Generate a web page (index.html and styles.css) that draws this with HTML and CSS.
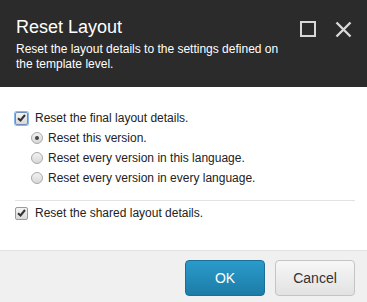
FILE: index.html
```html
<!DOCTYPE html>
<html>
<head>
<meta charset="utf-8">
<link rel="stylesheet" href="styles.css">
</head>
<body>
<div class="dialog">
  <div class="header">
    <div class="header-text">
      <div class="title">Reset Layout</div>
      <div class="subtitle">Reset the layout details to the settings defined on the template level.</div>
    </div>
    <div class="header-icons">
      <svg class="icon" width="16" height="16" viewBox="0 0 16 16"><rect x="1" y="1" width="14" height="14" fill="none" stroke="#d8d8d8" stroke-width="2"/></svg>
      <svg class="icon" width="17" height="17" viewBox="0 0 17 17"><path d="M1.5 1.5 L15.5 15.5 M15.5 1.5 L1.5 15.5" stroke="#d8d8d8" stroke-width="2.4" fill="none"/></svg>
    </div>
  </div>
  <div class="content">
    <div class="row">
      <span class="check focus"><svg width="9" height="8" viewBox="0 0 9 8"><path d="M1 4.2 L3.5 6.5 L8 1" stroke="#333" stroke-width="2" fill="none"/></svg></span>
      <span class="label">Reset the final layout details.</span>
    </div>
    <div class="row sub">
      <span class="radio on"><span class="dot"></span></span>
      <span class="label">Reset this version.</span>
    </div>
    <div class="row sub">
      <span class="radio"></span>
      <span class="label">Reset every version in this language.</span>
    </div>
    <div class="row sub">
      <span class="radio"></span>
      <span class="label">Reset every version in every language.</span>
    </div>
    <div class="sep"></div>
    <div class="row">
      <span class="check"><svg width="9" height="8" viewBox="0 0 9 8"><path d="M1 4.2 L3.5 6.5 L8 1" stroke="#333" stroke-width="2" fill="none"/></svg></span>
      <span class="label">Reset the shared layout details.</span>
    </div>
  </div>
  <div class="footer">
    <button class="btn primary">OK</button>
    <button class="btn">Cancel</button>
  </div>
</div>
</body>
</html>
```
FILE: styles.css
```css
html, body {
  margin: 0;
  padding: 0;
  background: #fff;
}
body {
  font-family: "Liberation Sans", Arial, sans-serif;
}
.dialog {
  width: 367px;
  height: 302px;
  display: flex;
  flex-direction: column;
}
.header {
  background: #2b2b2b;
  color: #fff;
  height: 87px;
  box-sizing: border-box;
  padding: 16px 15px 0 16px;
  display: flex;
  justify-content: space-between;
}
.title {
  font-size: 18px;
  line-height: 22px;
  margin-bottom: 4px;
}
.subtitle {
  font-size: 12px;
  line-height: 15px;
  width: 275px;
}
.header-icons {
  display: flex;
  gap: 19px;
  padding-top: 5px;
  align-items: flex-start;
}
.content {
  flex: 1;
  padding: 21px 12px 0 15px;
  color: #222;
  font-size: 12px;
}
.row {
  display: flex;
  align-items: center;
  height: 20px;
}
.row.sub {
  padding-left: 16px;
}
.check {
  width: 11px;
  height: 11px;
  border: 1px solid #9a9a9a;
  border-radius: 2px;
  background: linear-gradient(#f4f4f4, #d9d9d9);
  display: flex;
  align-items: center;
  justify-content: center;
  margin-right: 7px;
}
.check.focus {
  box-shadow: 0 0 0 1px #88b7ec;
  border-color: #6f8fb8;
}
.radio {
  width: 10px;
  height: 10px;
  border: 1px solid #a8a8a8;
  border-radius: 50%;
  background: linear-gradient(#f2f2f2, #d8d8d8);
  display: flex;
  align-items: center;
  justify-content: center;
  margin-right: 5px;
}
.radio .dot {
  width: 4px;
  height: 4px;
  border-radius: 50%;
  background: #444;
}
.sep {
  height: 1px;
  background: #e2e2e2;
  margin: 12px 0 2px;
}
.footer {
  height: 52px;
  box-sizing: border-box;
  border-top: 1px solid #e3e3e3;
  background: #f0f0f0;
  padding: 9px 12px 0 0;
  display: flex;
  justify-content: flex-end;
  gap: 10px;
}
.btn {
  width: 80px;
  height: 36px;
  border-radius: 4px;
  border: 1px solid #c4c4c4;
  background: linear-gradient(#f7f7f7, #e2e2e2);
  color: #333;
  font-family: "Liberation Sans", Arial, sans-serif;
  font-size: 14px;
  padding: 0;
}
.btn.primary {
  border-color: #1b6f96;
  background: linear-gradient(#2a9bcb, #1d7ca7);
  color: #fff;
}
```
